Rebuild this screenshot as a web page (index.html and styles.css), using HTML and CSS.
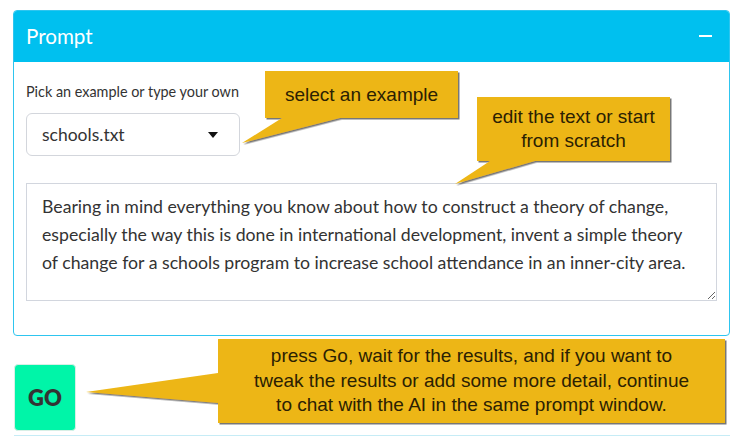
FILE: index.html
```html
<!DOCTYPE html>
<html>
<head>
<meta charset="utf-8">
<link rel="stylesheet" href="styles.css">
</head>
<body>
<div class="page">
  <section class="panel">
    <header class="panel-head">
      <h2 class="panel-title">Prompt</h2>
      <button class="collapse" aria-label="collapse"><span class="minus"></span></button>
    </header>
    <div class="panel-body">
      <label class="field-label">Pick an example or type your own</label>
      <div class="select">
        <span class="select-value">schools.txt</span>
        <span class="caret"></span>
      </div>
      <textarea class="prompt-text">Bearing in mind everything you know about how to construct a theory of change, especially the way this is done in international development, invent a simple theory of change for a schools program to increase school attendance in an inner-city area.</textarea>
    </div>
  </section>
  <button class="go">GO</button>
  <div class="next-panel"></div>

  <svg class="callout-shapes" width="740" height="436" viewBox="0 0 740 436">
    <defs>
      <filter id="sh" x="-10%" y="-10%" width="120%" height="130%">
        <feDropShadow dx="1.5" dy="1.5" stdDeviation="0.6" flood-color="#4a4a4a" flood-opacity="0.75"/>
      </filter>
    </defs>
    <g fill="#edb614" filter="url(#sh)">
      <polygon points="265,71 458,71 458,118 340,118 242,143 282,118 265,118"/>
      <polygon points="477,97 670,97 670,161 535,161 455,184 490,161 477,161"/>
      <polygon points="218,339 725,339 725,423 218,423 218,403 86,392 218,373"/>
    </g>
  </svg>
  <div class="callout c1">select an example</div>
  <div class="callout c2">edit the text or start<br>from scratch</div>
  <div class="callout c3">press Go, wait for the results, and if you want to<br>tweak the results or add some more detail, continue<br>to chat with the AI in the same prompt window.</div>
</div>
</body>
</html>
```
FILE: styles.css
```css
* { box-sizing: border-box; }
html, body { margin: 0; padding: 0; background: #fff; }
body { font-family: Lato, "Noto Sans", sans-serif; color: #333; }
.page {
  position: relative;
  width: 740px;
  height: 436px;
  overflow: hidden;
  padding: 10px 0 0 13px;
}
.panel {
  width: 717px;
  border: 1px solid #2ec5ef;
  border-radius: 4px;
  overflow: hidden;
}
.panel-head {
  height: 52px;
  background: #00c0ef;
  display: flex;
  align-items: center;
  justify-content: space-between;
  padding: 0 18px 0 13px;
  margin: -1px -1px 0 -1px;
}
.panel-title {
  margin: 0;
  font-size: 20.6px;
  font-weight: 400;
  color: #fff;
}
.collapse {
  border: 0;
  background: transparent;
  padding: 0;
  width: 13px;
  height: 14px;
  display: flex;
  align-items: center;
}
.minus { display: block; width: 13px; height: 2px; background: #fff; }
.panel-body {
  padding: 21px 11px 34px 12px;
  display: flex;
  flex-direction: column;
}
.field-label {
  font-size: 14.4px;
  color: #333;
  line-height: 18px;
  margin-bottom: 12px;
}
.select {
  width: 214px;
  height: 43px;
  border: 1px solid #d3d6dc;
  border-radius: 6px;
  display: flex;
  align-items: center;
  justify-content: space-between;
  padding: 0 21px 0 15px;
  margin-bottom: 27px;
}
.select-value { font-size: 17.5px; color: #333; }
.caret {
  width: 0; height: 0;
  border-left: 5.5px solid transparent;
  border-right: 5.5px solid transparent;
  border-top: 6px solid #111;
}
.prompt-text {
  display: block;
  width: 691px;
  height: 118px;
  border: 1px solid #d2d6de;
  border-radius: 0;
  padding: 9px 15px;
  font-family: Lato, "Noto Sans", sans-serif;
  font-size: 17.7px;
  line-height: 28px;
  color: #333;
  resize: vertical;
  overflow: hidden;
}
.go {
  display: flex;
  align-items: center;
  justify-content: center;
  margin: 28px 0 0 1px;
  width: 62px;
  height: 67px;
  background: #00f5a8;
  border: 1px solid #d8efe6;
  border-radius: 4px;
  font-family: Lato, "Noto Sans", sans-serif;
  font-weight: 800;
  font-size: 22px;
  color: #333;
  padding: 0;
}
.next-panel {
  margin: 4px 0 0 1px;
  width: 716px;
  border-top: 1px solid #c6ecf6;
}
.callout-shapes { position: absolute; left: 0; top: 0; pointer-events: none; }
.callout {
  position: absolute;
  font-family: "Liberation Sans", Arial, sans-serif;
  font-size: 19px;
  line-height: 24px;
  color: #2b2103;
  text-align: center;
  display: flex;
  align-items: center;
  justify-content: center;
}
.c1 { left: 265px; top: 71px; width: 193px; height: 47px; }
.c2 { left: 477px; top: 97px; width: 193px; height: 64px; }
.c3 { left: 218px; top: 339px; width: 507px; height: 84px; line-height: 24.5px; }
```
